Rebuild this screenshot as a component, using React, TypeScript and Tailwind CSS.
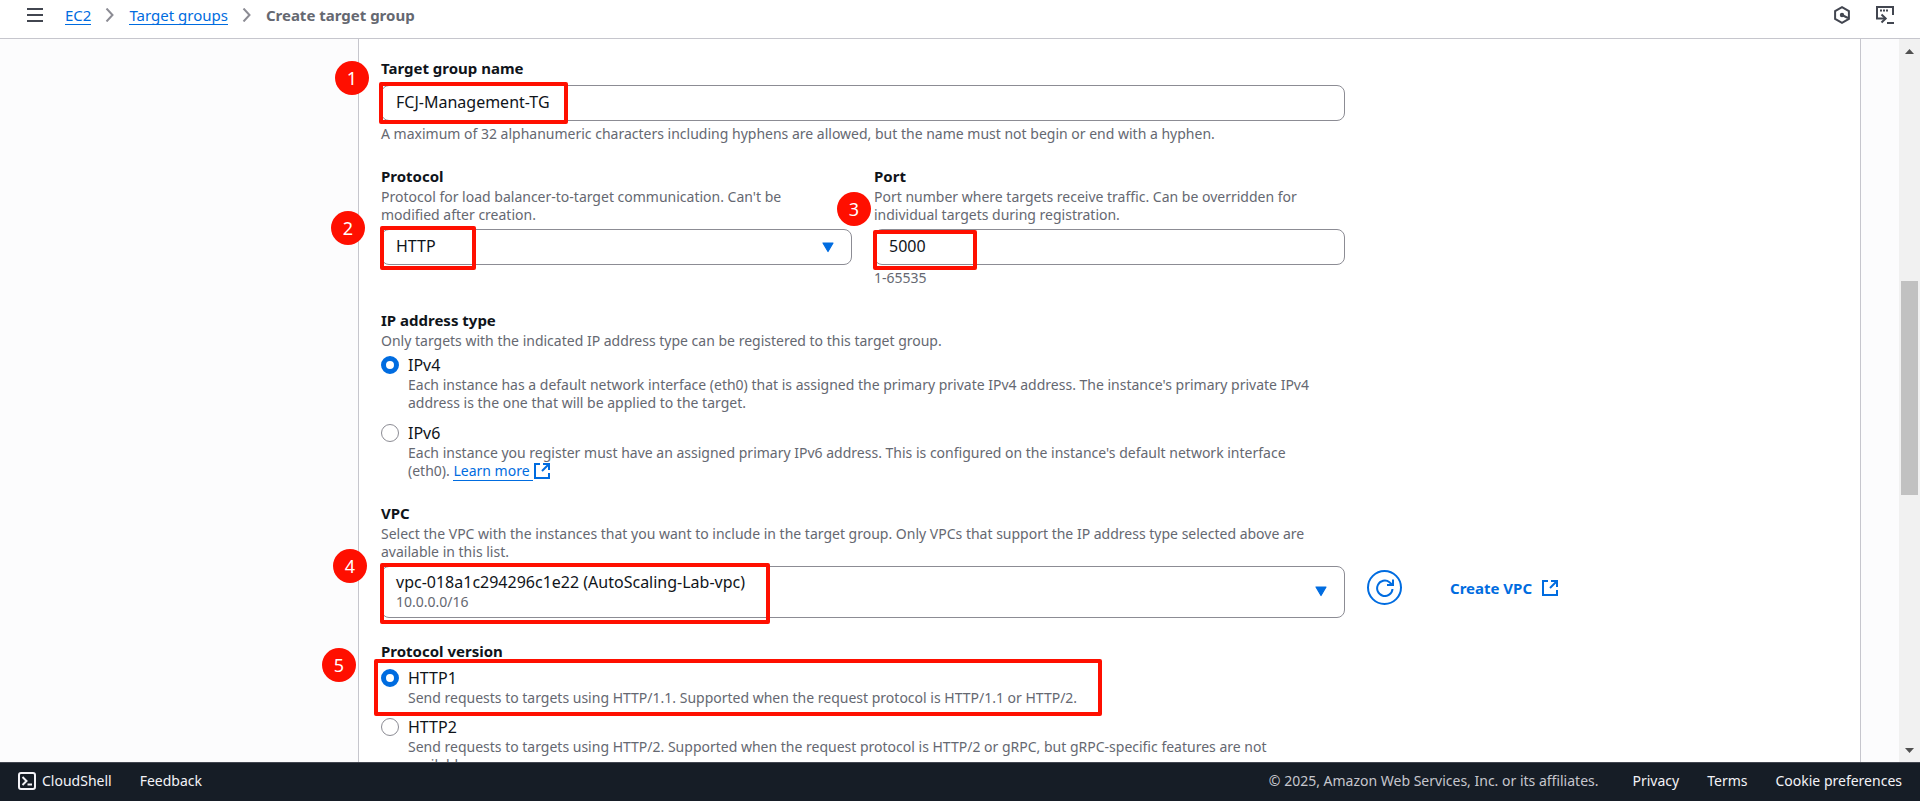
import type { ReactNode } from "react";

const hintText = "text-[14px] leading-[18px] text-[#656871]";
const hintBlock = "pr-5 text-[14px] leading-[18px] text-[#656871]";
const labelText = "block pb-px text-[15px] leading-[22px] font-bold text-[#0f141a]";
const controlBox =
  "block w-full h-9 rounded-lg border border-[#8c8c94] bg-white px-[14px] pb-[2px] text-[16px] leading-[22px] text-[#0f141a]";

function Chevron() {
  return (
    <svg width="10" height="14" viewBox="0 0 10 14" fill="none" stroke="#8c8c94" strokeWidth="2" aria-hidden="true">
      <path d="M1.5 0.5 L7.5 7 L1.5 13.5" />
    </svg>
  );
}

function Caret() {
  return (
    <svg width="12" height="11" viewBox="0 0 12 11" className="pointer-events-none" aria-hidden="true">
      <path d="M1 1 H11 L6 9.5 Z" fill="#006ce0" stroke="#006ce0" strokeWidth="1.2" strokeLinejoin="round" />
    </svg>
  );
}

function ExternalIcon({ className = "" }: { className?: string }) {
  return (
    <svg
      width="16"
      height="16"
      viewBox="0 0 16 16"
      fill="none"
      stroke="#006ce0"
      strokeWidth="2"
      className={className}
      aria-hidden="true"
    >
      <path d="M6 1 H1 V15 H15 V10" />
      <path d="M9 1 H15 V7" />
      <path d="M15 1 L8 8" />
    </svg>
  );
}

function Badge({ n, className }: { n: number; className: string }) {
  return (
    <span
      className={`pointer-events-none absolute z-20 flex size-[34px] items-center justify-center rounded-full bg-[#ff0f00] text-[18px] leading-none text-white ${className}`}
    >
      {n}
    </span>
  );
}

function Frame({ className }: { className: string }) {
  return <span className={`pointer-events-none absolute z-10 rounded-[2px] border-4 border-[#ff0f00] ${className}`} />;
}

function RadioRow(props: {
  id: string;
  name: string;
  label: string;
  checked?: boolean;
  children: ReactNode;
}) {
  return (
    <div className="flex gap-[9px]">
      <input
        type="radio"
        id={props.id}
        name={props.name}
        defaultChecked={props.checked}
        className="mt-[2px] size-[18px] shrink-0 appearance-none rounded-full border border-[#8c8c94] bg-white checked:border-[5px] checked:border-[#006ce0]"
      />
      <div className="min-w-0">
        <label htmlFor={props.id} className="block text-[16px] leading-[22px] text-[#0f141a]">
          {props.label}
        </label>
        <p className={hintBlock}>{props.children}</p>
      </div>
    </div>
  );
}

function TopBar() {
  return (
    <header className="flex h-[39px] shrink-0 items-center justify-between border-b border-[#c6c6cd] bg-white pr-[26px] pb-2 pl-[27px]">
      <div className="flex items-center gap-[22px]">
        <button type="button" aria-label="Open navigation">
          <svg width="16" height="14" viewBox="0 0 16 14" stroke="#424650" strokeWidth="2" aria-hidden="true">
            <path d="M0 1 H16 M0 7 H16 M0 13 H16" />
          </svg>
        </button>
        <nav aria-label="Breadcrumb" className="flex items-center gap-[14px] text-[15px] leading-[18px]">
          <a href="#ec2" className="border-b border-[#006ce0] text-[#006ce0]">EC2</a>
          <Chevron />
          <a href="#target-groups" className="border-b border-[#006ce0] text-[#006ce0]">Target groups</a>
          <Chevron />
          <span className="pb-px font-bold text-[#656871]">Create target group</span>
        </nav>
      </div>
      <div className="flex items-center gap-[26px]">
        <button type="button" aria-label="Recommendations">
          <svg width="16" height="18" viewBox="0 0 16 18" fill="none" stroke="#424650" strokeWidth="2" aria-hidden="true">
            <path d="M8 1.2 L14.9 5 V13 L8 16.8 L1.1 13 V5 Z" />
            <circle cx="8" cy="9" r="2.2" fill="#424650" stroke="none" />
            <path d="M8 9 L14 12" />
          </svg>
        </button>
        <button type="button" aria-label="CloudShell actions">
          <svg width="18" height="18" viewBox="0 0 18 18" fill="none" stroke="#424650" strokeWidth="2" aria-hidden="true">
            <path d="M17 9 V1 H1 V12.5 H9.5" />
            <path d="M5.5 8.5 L9.7 12.5 L5.5 16.5" />
            <path d="M11 17 H18" />
            <path d="M4 4.5 H6 M7 4.5 H9 M10 4.5 H12" />
          </svg>
        </button>
      </div>
    </header>
  );
}

function ScrollRail() {
  return (
    <div className="flex w-[21px] shrink-0 flex-col items-center bg-[#f1f1f1]" aria-hidden="true">
      <div className="flex h-6 items-center justify-center">
        <svg width="9" height="5" viewBox="0 0 9 5"><path d="M0 5 L4.5 0 L9 5 Z" fill="#505050" /></svg>
      </div>
      <div className="grow-[218]" />
      <div className="w-[17px] grow-[214] bg-[#c1c1c1]" />
      <div className="grow-[243]" />
      <div className="flex h-6 items-center justify-center">
        <svg width="9" height="5" viewBox="0 0 9 5"><path d="M0 0 L4.5 5 L9 0 Z" fill="#505050" /></svg>
      </div>
    </div>
  );
}

function TargetGroupForm() {
  return (
    <form className="flex flex-col gap-[22px]">
      <div className="grid grid-cols-3 gap-x-[22px]">
        <div className="col-span-2">
          <label htmlFor="tg-name" className={labelText}>Target group name</label>
          <div className="relative mt-[5px]">
            <input id="tg-name" type="text" defaultValue="FCJ-Management-TG" className={controlBox} />
            <Frame className="-top-[3px] -left-[2px] h-[42px] w-[189px]" />
            <Badge n={1} className="-top-6 -left-[46px]" />
          </div>
          <p className={`mt-1 ${hintBlock}`}>
            A maximum of 32 alphanumeric characters including hyphens are allowed, but the name must not begin or end
            with a hyphen.
          </p>
        </div>
      </div>

      <div className="grid grid-cols-3 gap-x-[22px]">
        <div>
          <label htmlFor="protocol" className={labelText}>Protocol</label>
          <p className={hintBlock}>
            Protocol for load balancer-to-target communication. Can't be modified after creation.
          </p>
          <div className="relative mt-[5px]">
            <select id="protocol" className={`${controlBox} appearance-none`} defaultValue="HTTP">
              <option>HTTP</option>
            </select>
            <span className="pointer-events-none absolute inset-y-0 right-[18px] flex items-center"><Caret /></span>
            <Frame className="-top-[3px] -left-px h-11 w-24" />
            <Badge n={2} className="-top-[18px] -left-[50px]" />
          </div>
        </div>
        <div>
          <label htmlFor="port" className={labelText}>Port</label>
          <p className={hintBlock}>
            Port number where targets receive traffic. Can be overridden for individual targets during registration.
          </p>
          <div className="relative mt-[5px]">
            <input id="port" type="text" inputMode="numeric" defaultValue="5000" className={controlBox} />
            <Frame className="top-px -left-px h-10 w-[104px]" />
            <Badge n={3} className="-top-[37px] -left-[37px]" />
          </div>
          <p className={`mt-1 ${hintBlock}`}>1-65535</p>
        </div>
      </div>

      <div className="grid grid-cols-3 gap-x-[22px]">
        <fieldset className="col-span-2">
          <legend className={labelText}>IP address type</legend>
          <p className={hintBlock}>
            Only targets with the indicated IP address type can be registered to this target group.
          </p>
          <div className="mt-1 flex flex-col gap-[10px]">
            <RadioRow id="ipv4" name="ip-type" label="IPv4" checked>
              Each instance has a default network interface (eth0) that is assigned the primary private IPv4 address.
              The instance's primary private IPv4 address is the one that will be applied to the target.
            </RadioRow>
            <RadioRow id="ipv6" name="ip-type" label="IPv6">
              Each instance you register must have an assigned primary IPv6 address. This is configured on the
              instance's default network interface (eth0).{" "}
              <a href="#learn-more" className="whitespace-nowrap text-[#006ce0]">
                <span className="border-b border-[#006ce0]">Learn more </span>
                <ExternalIcon className="ml-px inline-block align-[-3px]" />
              </a>
            </RadioRow>
          </div>
        </fieldset>
      </div>

      <div className="grid grid-cols-3 gap-x-[22px]">
        <div className="col-span-2">
          <span id="vpc-label" className={labelText}>VPC</span>
          <p className={hintBlock}>
            Select the VPC with the instances that you want to include in the target group. Only VPCs that support the
            IP address type selected above are available in this list.
          </p>
          <div className="relative mt-[5px]">
            <button
              type="button"
              aria-haspopup="listbox"
              aria-labelledby="vpc-label"
              className="flex h-[52px] w-full items-center justify-between rounded-lg border border-[#8c8c94] bg-white pr-[17px] pb-[2px] pl-[14px] text-left"
            >
              <span>
                <span className="block text-[16px] leading-[22px] text-[#0f141a]">
                  vpc-018a1c294296c1e22 (AutoScaling-Lab-vpc)
                </span>
                <span className={`block ${hintText}`}>10.0.0.0/16</span>
              </span>
              <Caret />
            </button>
            <Frame className="-top-[3px] -left-px h-[61px] w-[390px]" />
            <Badge n={4} className="-top-[17px] -left-12" />
          </div>
        </div>
        <div className="flex items-center gap-7 self-end pb-[13px]">
          <button
            type="button"
            aria-label="Refresh VPC list"
            className="flex size-[35px] items-center justify-center rounded-full border-2 border-[#006ce0]"
          >
            <svg width="18" height="18" viewBox="0 0 18 18" fill="none" stroke="#006ce0" strokeWidth="2" aria-hidden="true">
              <path d="M16.5 10 A7.7 7.7 0 1 1 13.5 3.2 L16.5 6" />
              <path d="M17 0.5 V6 H11" />
            </svg>
          </button>
          <a href="#create-vpc" className="flex items-center gap-[10px] px-5 text-[15px] leading-[22px] font-bold text-[#006ce0]">
            Create VPC
            <ExternalIcon />
          </a>
        </div>
      </div>

      <div className="grid grid-cols-3 gap-x-[22px]">
        <fieldset className="col-span-2">
          <legend className={labelText}>Protocol version</legend>
          <div className="mt-1 flex flex-col gap-[9px]">
            <div className="relative">
              <RadioRow id="http1" name="protocol-version" label="HTTP1" checked>
                Send requests to targets using HTTP/1.1. Supported when the request protocol is HTTP/1.1 or HTTP/2.
              </RadioRow>
              <Frame className="-top-2 -left-[7px] h-[57px] w-[728px]" />
              <Badge n={5} className="-top-[19px] -left-[59px]" />
            </div>
            <RadioRow id="http2" name="protocol-version" label="HTTP2">
              Send requests to targets using HTTP/2. Supported when the request protocol is HTTP/2 or gRPC, but
              gRPC-specific features are not available.
            </RadioRow>
          </div>
        </fieldset>
      </div>
    </form>
  );
}

function Footer() {
  return (
    <footer className="flex h-[39px] shrink-0 items-center justify-between border-t border-[#424650] bg-[#161d26] px-[18px] pb-[2px] text-[14px] leading-[18px] text-[#f3f3f7]">
      <div className="flex items-center gap-7">
        <button type="button" className="flex items-center gap-[6px]">
          <svg width="18" height="18" viewBox="0 0 18 18" fill="none" stroke="#f3f3f7" strokeWidth="2" aria-hidden="true">
            <rect x="1" y="1" width="16" height="16" rx="2" />
            <path d="M4.5 5 L8.5 9 L4.5 13" />
            <path d="M9.5 12.5 H14" />
          </svg>
          CloudShell
        </button>
        <a href="#feedback">Feedback</a>
      </div>
      <div className="flex items-center gap-7">
        <span className="pr-[6px] text-[#c6c6cd]">© 2025, Amazon Web Services, Inc. or its affiliates.</span>
        <a href="#privacy">Privacy</a>
        <a href="#terms">Terms</a>
        <button type="button">Cookie preferences</button>
      </div>
    </footer>
  );
}

export default function App() {
  return (
    <div className="flex h-screen flex-col bg-white font-['Noto_Sans','Open_Sans',sans-serif]">
      <TopBar />
      <div className="flex min-h-0 flex-1">
        <main className="min-w-0 flex-1 overflow-hidden bg-[#fcfcfd] pr-[38px] pl-[358px]">
          <div className="border-x border-[#c6c6cd] bg-white px-[22px] pt-[18px] pb-6">
            <TargetGroupForm />
          </div>
        </main>
        <ScrollRail />
      </div>
      <Footer />
    </div>
  );
}
